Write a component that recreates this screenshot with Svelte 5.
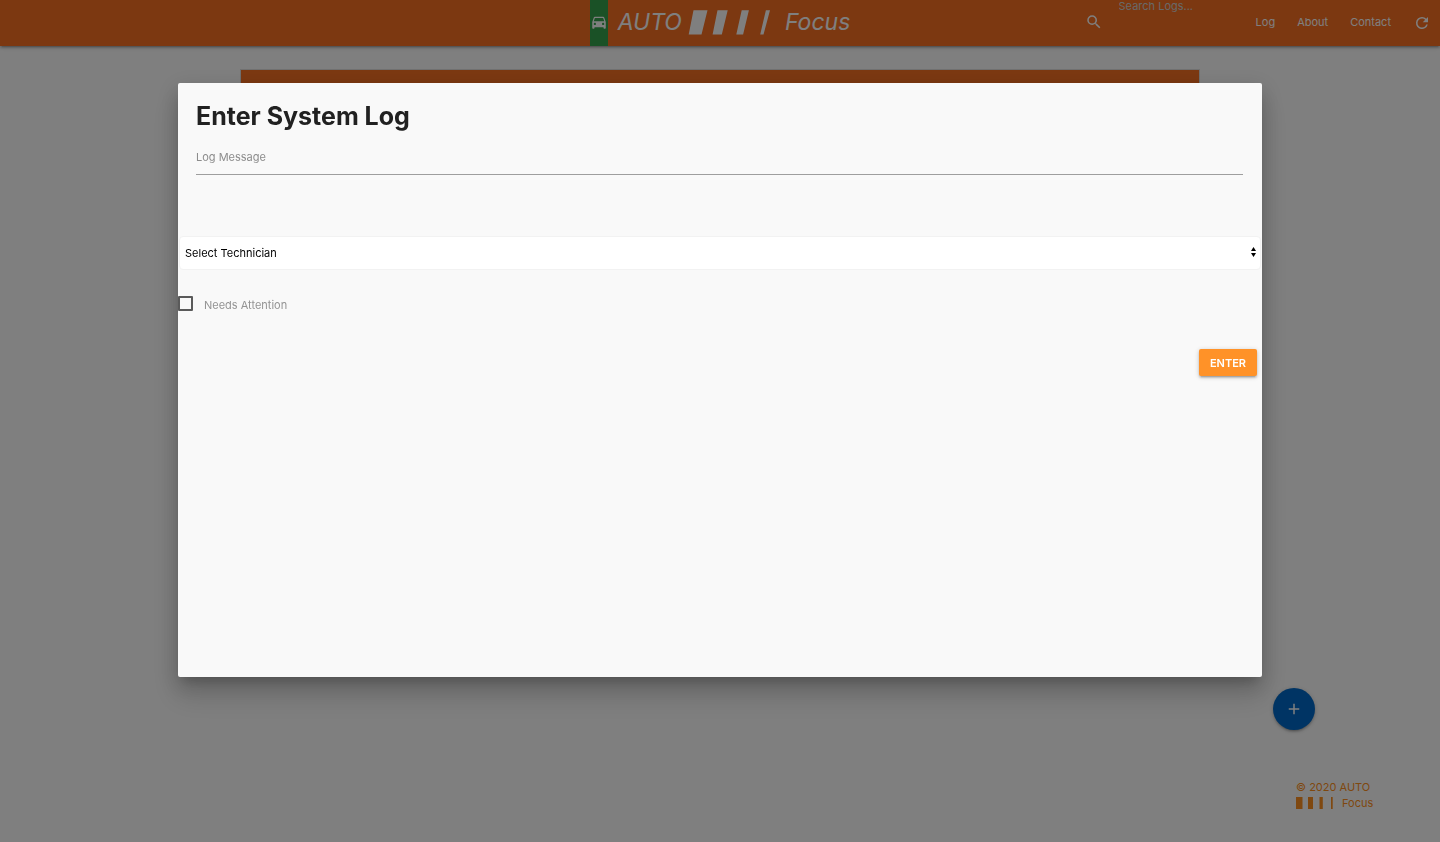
<script>
  let message = $state('');
  let technician = $state('');
  let attention = $state(false);
  let search = $state('');
  const links = ['Log', 'About', 'Contact'];
</script>

<div class="page">
  <header class="navbar">
    <a class="brand" href="#home" aria-label="AUTO Focus">
      <span class="badge">
        <svg width="18" height="18" viewBox="0 0 24 24" fill="currentColor" aria-hidden="true">
          <path d="M18.92 6.01C18.72 5.42 18.16 5 17.5 5h-11c-.66 0-1.21.42-1.42 1.01L3 12v8c0 .55.45 1 1 1h1c.55 0 1-.45 1-1v-1h12v1c0 .55.45 1 1 1h1c.55 0 1-.45 1-1v-8l-2.08-5.99zM6.5 16c-.83 0-1.5-.67-1.5-1.5S5.67 13 6.5 13s1.5.67 1.5 1.5S7.33 16 6.5 16zm11 0c-.83 0-1.5-.67-1.5-1.5s.67-1.5 1.5-1.5 1.5.67 1.5 1.5-.67 1.5-1.5 1.5zM5 11l1.500-4.500h11L19 11H5z" />
        </svg>
      </span>
      <span class="word">AUTO</span>
      <svg class="bars" width="83" height="25" viewBox="0 0 83 25" fill="currentColor" aria-hidden="true">
        <path d="M5.500 0.300H19.500L13.500 24.500H0.700zM29.500 0.300H39.700L33.800 24.500H24.600zM53.700 0.300H60.900L55.100 24.500H48.300zM77.900 0.300H82L75.500 24.500H72.200z" />
      </svg>
      <span class="word">Focus</span>
    </a>
    <div class="tools">
      <form class="search">
        <label for="search" aria-label="Search">
          <svg width="18" height="18" viewBox="0 0 24 24" fill="currentColor" aria-hidden="true">
            <path d="M15.500 14h-.79l-.28-.27A6.471 6.471 0 0 0 16 9.500 6.500 6.500 0 1 0 9.500 16c1.610 0 3.090-.59 4.230-1.570l.27.28v.79l5 4.990L20.490 19l-4.990-5zm-6 0C7.010 14 5 11.990 5 9.500S7.010 5 9.500 5 14 7.010 14 9.500 11.990 14 9.500 14z" />
          </svg>
        </label>
        <input id="search" type="search" placeholder="Search Logs..." bind:value={search} />
      </form>
      <nav>
        {#each links as link}
          <a href="#{link.toLowerCase()}">{link}</a>
        {/each}
        <a class="refresh" href="#refresh" aria-label="Refresh">
          <svg width="18" height="18" viewBox="0 0 24 24" fill="currentColor" aria-hidden="true">
            <path d="M17.650 6.350A7.958 7.958 0 0 0 12 4a8 8 0 1 0 7.730 10h-2.080A5.990 5.990 0 0 1 12 18a6 6 0 1 1 0-12c1.660 0 3.140.69 4.220 1.780L13 11h7V4l-2.350 2.350z" />
          </svg>
        </a>
      </nav>
    </div>
  </header>

  <main>
    <div class="collection"></div>
  </main>

  <footer>
    <div class="copy">
      <span>© 2020 AUTO</span>
      <span class="focus">
        <svg width="38" height="12" viewBox="0 0 38 12" fill="currentColor" aria-hidden="true">
          <path d="M0 0h6.500v12H0zM12 0h5v12h-5zM23.500 0h3.300v12h-3.300zM35 0h1.700v12H35z" />
        </svg>
        Focus
      </span>
    </div>
  </footer>

  <button class="fab" type="button" aria-label="Add log">
    <svg width="18" height="18" viewBox="0 0 24 24" fill="currentColor" aria-hidden="true">
      <path d="M19 13h-6v6h-2v-6H5v-2h6V5h2v6h6v2z" />
    </svg>
  </button>
</div>

<div class="overlay">
  <div class="modal" role="dialog" aria-modal="true" aria-labelledby="title">
    <div class="content">
      <h1 id="title">Enter System Log</h1>
      <input id="message" class="message" type="text" placeholder="Log Message" aria-label="Log Message" bind:value={message} />
    </div>
    <div class="picker">
      <select aria-label="Technician" bind:value={technician}>
        <option value="">Select Technician</option>
      </select>
      <svg width="5" height="10" viewBox="0 0 5 10" aria-hidden="true">
        <path d="M2.500 0L5 4H0zM2.500 10L0 6h5z" />
      </svg>
    </div>
    <label class="attention">
      <input type="checkbox" bind:checked={attention} />
      <span>Needs Attention</span>
    </label>
    <div class="actions">
      <button type="button">ENTER</button>
    </div>
  </div>
</div>

<style>
  :global(body) {
    margin: 0;
    background: #fff;
    font: 11px/16px Inter, 'Liberation Sans', sans-serif;
  }
  * {
    box-sizing: border-box;
  }
  input,
  select,
  button {
    font: inherit;
  }
  a {
    color: inherit;
    text-decoration: none;
  }
  svg {
    display: block;
  }
  .page {
    display: flex;
    flex-direction: column;
    min-height: 100vh;
  }
  .navbar {
    display: grid;
    grid-template-columns: 1fr auto 1fr;
    height: 46px;
    background: #f97123;
    color: #fff;
    box-shadow: 0 2px 2px rgba(0, 0, 0, 0.14), 0 3px 1px -2px rgba(0, 0, 0, 0.12), 0 1px 5px rgba(0, 0, 0, 0.2);
  }
  .brand {
    grid-column: 2;
    display: flex;
    align-items: center;
    height: 45px;
    font-size: 23px;
    font-style: italic;
    line-height: 45px;
  }
  .badge {
    display: flex;
    align-items: center;
    align-self: stretch;
    height: 46px;
    padding-bottom: 2px;
    margin-right: 10px;
    background: #35a34c;
  }
  .bars {
    margin: 0 14px 0 6px;
  }
  .tools {
    display: flex;
    justify-content: flex-end;
  }
  .search {
    display: flex;
    align-items: flex-start;
    gap: 16px;
  }
  .search label {
    padding-top: 13px;
  }
  .search input {
    width: 126px;
    height: 12px;
    padding: 0;
    border: 0;
    outline: 0;
    background: none;
    color: #fff;
    appearance: none;
  }
  .search input::placeholder {
    color: #d1d1d1;
    opacity: 1;
  }
  nav {
    display: flex;
    height: 45px;
    line-height: 45px;
  }
  nav a {
    padding: 0 11px;
  }
  nav .refresh {
    display: flex;
    align-items: center;
    padding-right: 9px;
  }
  main {
    padding: 23px 240px 0;
  }
  .collection {
    height: 60px;
    border: 1px solid #e0e0e0;
    background: #f97123;
  }
  footer {
    display: flex;
    justify-content: flex-end;
    margin-top: auto;
    padding: 0 68px 31px 0;
    color: #ff9020;
  }
  .copy {
    display: grid;
    width: 76px;
  }
  .focus {
    display: flex;
    align-items: center;
    gap: 8px;
  }
  .fab {
    position: fixed;
    right: 125px;
    bottom: 112px;
    display: grid;
    place-items: center;
    width: 42px;
    height: 42px;
    padding: 0;
    border: 0;
    border-radius: 50%;
    background: #0069c8;
    color: #fff;
    box-shadow: 0 2px 2px rgba(0, 0, 0, 0.14), 0 3px 1px -2px rgba(0, 0, 0, 0.12), 0 1px 5px rgba(0, 0, 0, 0.2);
  }
  .overlay {
    position: fixed;
    inset: 0;
    display: grid;
    padding: 83px 178px 165px;
    background: rgba(0, 0, 0, 0.5);
  }
  .modal {
    border-radius: 2px;
    background: #f9f9f9;
    box-shadow: 0 18px 28px 2px rgba(0, 0, 0, 0.14), 0 7px 22px 4px rgba(0, 0, 0, 0.12), 0 8px 11px -5px rgba(0, 0, 0, 0.2);
  }
  .content {
    padding: 18px 19px 0 18px;
  }
  h1 {
    margin: 0;
    color: #212121;
    font-size: 25px;
    font-weight: 700;
    line-height: 30px;
  }
  .message {
    display: block;
    width: 100%;
    height: 36px;
    margin-top: 8px;
    padding: 0;
    border: 0;
    border-bottom: 1px solid #9e9e9e;
    outline: 0;
    background: none;
  }
  .message::placeholder {
    color: #8c8c8c;
    opacity: 1;
  }
  .picker {
    display: grid;
    align-items: center;
    margin: 61px 1px 0;
  }
  .picker > * {
    grid-area: 1 / 1;
  }
  .picker svg {
    justify-self: end;
    margin: 0 5px 2px 0;
    pointer-events: none;
  }
  select {
    width: 100%;
    height: 34px;
    padding: 0 5px;
    border: 1px solid #f2f2f2;
    border-radius: 4px;
    background: #fff;
    color: #000;
    appearance: none;
  }
  .attention {
    display: flex;
    align-items: flex-start;
    gap: 11px;
    width: max-content;
    margin-top: 26px;
    color: #949494;
  }
  .attention span {
    padding-top: 1px;
  }
  .attention input {
    width: 15px;
    height: 15px;
    margin: 0;
    border: 2px solid #5a5a5a;
    border-radius: 1px;
    appearance: none;
  }
  .attention input:checked {
    background: #ff9020;
  }
  .actions {
    display: flex;
    justify-content: flex-end;
    margin-top: 36px;
    padding-right: 5px;
  }
  .actions button {
    height: 27px;
    padding: 0 11px;
    border: 0;
    border-radius: 2px;
    background: #ff9228;
    color: #fff;
    font-weight: 600;
    box-shadow: 0 2px 2px rgba(0, 0, 0, 0.14), 0 3px 1px -2px rgba(0, 0, 0, 0.12), 0 1px 5px rgba(0, 0, 0, 0.2);
  }
</style>
